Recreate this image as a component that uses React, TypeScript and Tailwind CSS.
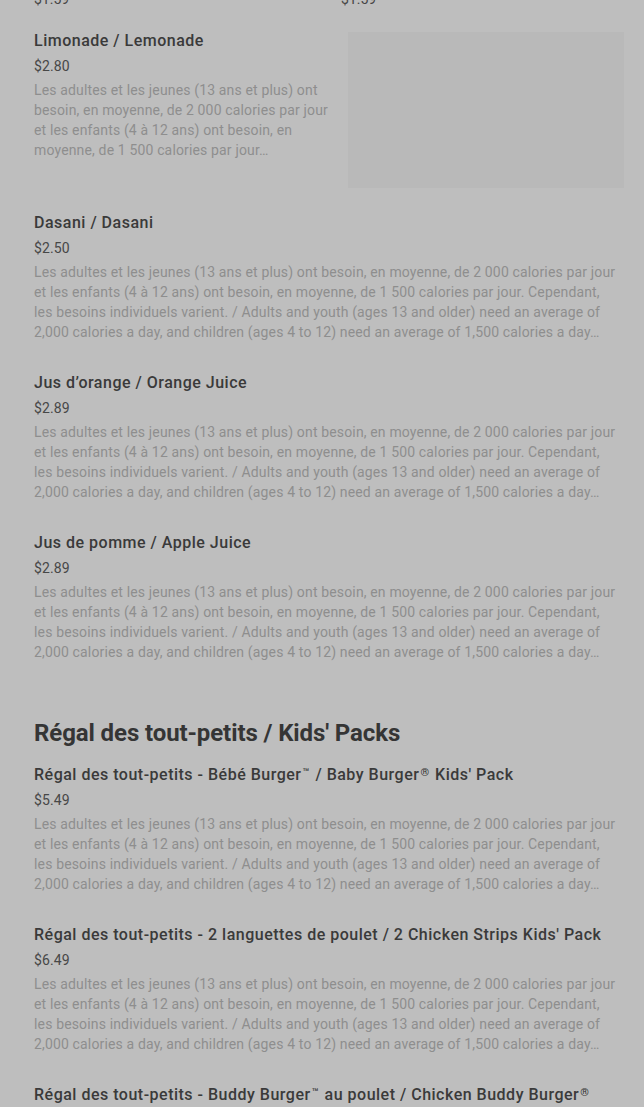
import type { ReactNode } from "react"

const DESC_LINES = [
  "Les adultes et les jeunes (13 ans et plus) ont besoin, en moyenne, de 2 000 calories par jour",
  "et les enfants (4 à 12 ans) ont besoin, en moyenne, de 1 500 calories par jour. Cependant,",
  "les besoins individuels varient. / Adults and youth (ages 13 and older) need an average of",
  "2,000 calories a day, and children (ages 4 to 12) need an average of 1,500 calories a day…",
]

const SHORT_LINES = [
  "Les adultes et les jeunes (13 ans et plus) ont",
  "besoin, en moyenne, de 2 000 calories par jour",
  "et les enfants (4 à 12 ans) ont besoin, en",
  "moyenne, de 1 500 calories par jour…",
]

const Sup = ({ children }: { children: ReactNode }) => (
  <span className="relative -top-[4px] px-[1px] text-[11px] leading-none">{children}</span>
)

const drinks = [
  { name: "Dasani / Dasani", price: "$2.50" },
  { name: "Jus d’orange / Orange Juice", price: "$2.89" },
  { name: "Jus de pomme / Apple Juice", price: "$2.89" },
]

const kids: { name: ReactNode; price: string }[] = [
  {
    name: (
      <>
        Régal des tout-petits - Bébé Burger<Sup>™</Sup> / Baby Burger<Sup>®</Sup> Kids' Pack
      </>
    ),
    price: "$5.49",
  },
  { name: "Régal des tout-petits - 2 languettes de poulet / 2 Chicken Strips Kids' Pack", price: "$6.49" },
  {
    name: (
      <>
        Régal des tout-petits - Buddy Burger<Sup>™</Sup> au poulet / Chicken Buddy Burger<Sup>®</Sup>
      </>
    ),
    price: "",
  },
]

const Title = ({ children }: { children: ReactNode }) => (
  <div className="text-[16px] leading-6 font-medium tracking-[0.5px] text-[#3a3a3a] whitespace-nowrap">
    {children}
  </div>
)

const Price = ({ children }: { children: ReactNode }) => (
  <div className="mt-[3px] text-[14px] leading-5 tracking-[0.1px] text-[#474747]">{children}</div>
)

const Desc = ({ lines }: { lines: string[] }) => (
  <div className="mt-1 text-[14px] leading-5 tracking-[0.15px] text-[#8e8e8e]">
    {lines.map((l) => (
      <div key={l} className="whitespace-nowrap">
        {l}
      </div>
    ))}
  </div>
)

const Item = ({ name, price }: { name: ReactNode; price: string }) => (
  <div className="mb-[29px]">
    <Title>{name}</Title>
    {price && <Price>{price}</Price>}
    {price && <Desc lines={DESC_LINES} />}
  </div>
)

export default function App() {
  return (
    <div className="h-[1107px] overflow-hidden bg-[#bebebe] pl-[34px] pr-5 font-['Roboto','Liberation_Sans',sans-serif]">
      <div className="-mt-[11px] grid grid-cols-[307px_1fr] text-[14px] leading-5 text-[#474747]">
        <div>$1.59</div>
        <div>$1.59</div>
      </div>

      <div className="mt-5 mb-[23px] flex">
        <div className="w-[298px]">
          <Title>Limonade / Lemonade</Title>
          <Price>$2.80</Price>
          <Desc lines={SHORT_LINES} />
        </div>
        <div className="ml-auto mt-[3px] h-[156px] w-[276px] bg-[#b9b9b9]" />
      </div>

      {drinks.map((d) => (
        <Item key={d.name} {...d} />
      ))}

      <h2 className="mt-[55px] text-[24px] leading-8 font-bold tracking-[-0.1px] text-[#353535]">
        Régal des tout-petits / Kids' Packs
      </h2>
      <div className="mt-[14px]">
        {kids.map((d, i) => (
          <Item key={i} {...d} />
        ))}
      </div>
    </div>
  )
}
